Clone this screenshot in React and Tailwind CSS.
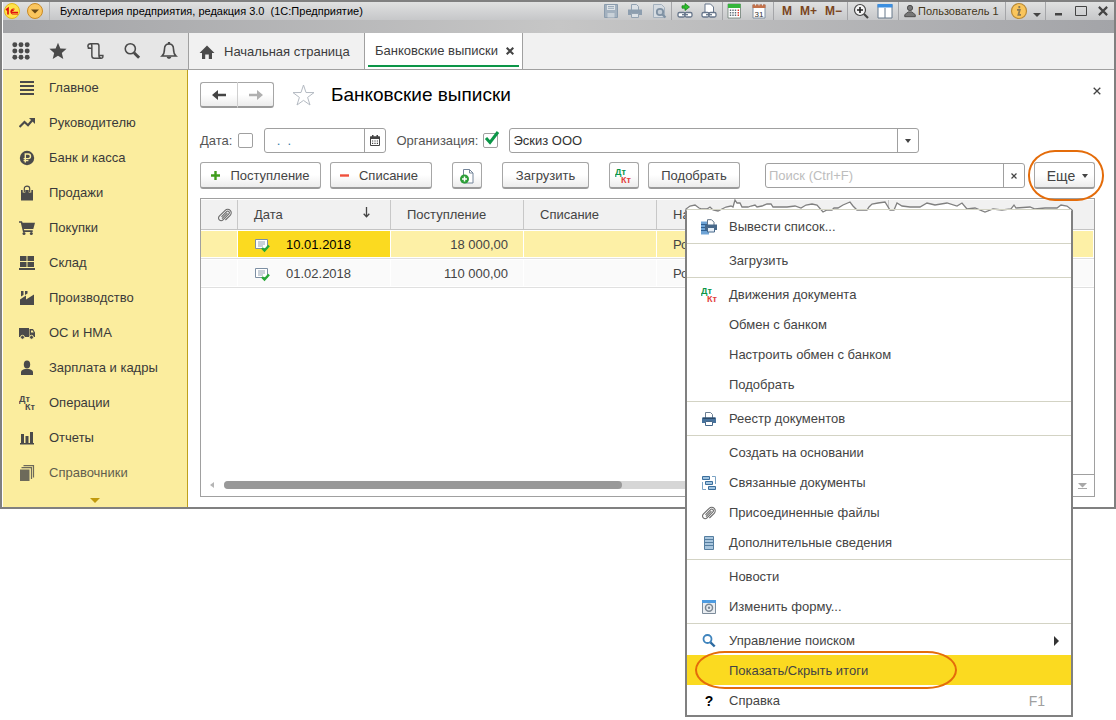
import React, { useState } from "react";
import clsx from "clsx";

/* ---------- ICON HELPERS ---------- */
const Icon = ({ size = 16, children, className }) => (
  <svg
    width={size}
    height={size}
    viewBox="0 0 16 16"
    fill="none"
    className={clsx("shrink-0", className)}
    aria-hidden="true"
  >
    {children}
  </svg>
);

const DtKt = ({ top = "#0a9648", bottom = "#e2403c" }) => (
  <svg width="18" height="16" viewBox="0 0 18 16" className="shrink-0" aria-hidden="true">
    <text x="0" y="7" fontSize="9" fontWeight="bold" fontFamily="Liberation Sans, sans-serif" fill={top}>
      Дт
    </text>
    <text x="6" y="15" fontSize="9" fontWeight="bold" fontFamily="Liberation Sans, sans-serif" fill={bottom}>
      Кт
    </text>
  </svg>
);

const CaretDown = () => (
  <svg width="6" height="4" viewBox="0 0 6 4" className="shrink-0" aria-hidden="true">
    <path d="M0 0h6L3 4z" fill="#444" />
  </svg>
);

const Clip = () => (
  <Icon>
    <path
      d="M4.5 8.8 9.6 3.6a1.6 1.6 0 0 1 2.3 2.3L6 11.8a2.6 2.6 0 0 1-3.7-3.7L8.2 2.3a3.5 3.5 0 0 1 5 5L8.4 12M10.4 5.2 5 10.6"
      stroke="#6a6a6a"
      strokeWidth="1.1"
      transform="translate(0 1)"
    />
  </Icon>
);

const Cross = ({ size = 8, width = 2 }) => (
  <svg width={size} height={size} viewBox="0 0 8 8" aria-hidden="true">
    <path d="M.7.7l6.6 6.6M7.3.7L.7 7.3" stroke="#444" strokeWidth={width} />
  </svg>
);

/* ---------- SIDEBAR ---------- */
const DARK = "#4a4a4a";

const sections = [
  {
    label: "Главное",
    icon: <path d="M1 1h14v2H1zM1 5h14v2H1zM1 9h14v2H1zM1 13h14v2H1z" fill={DARK} />,
  },
  {
    label: "Руководителю",
    icon: (
      <>
        <path d="M.5 12 5.5 7l3.5 3.2L13.5 5" stroke={DARK} strokeWidth="2.2" />
        <path d="M10 3h6v6z" fill={DARK} />
      </>
    ),
  },
  {
    label: "Банк и касса",
    icon: (
      <>
        <circle cx="8" cy="8" r="7.2" fill={DARK} />
        <path d="M6.3 12.5V4h2.9a2.3 2.3 0 0 1 0 4.6H4.6M4.6 10.6h4.8" stroke="#fbed9e" strokeWidth="1.4" />
      </>
    ),
  },
  {
    label: "Продажи",
    icon: (
      <>
        <path d="M2 5h12v10.5H2z" fill={DARK} />
        <path d="M5 7.5V3.4C5 0 11 0 11 3.4v4.1" stroke="#fbed9e" strokeWidth="2.6" />
        <path d="M5.3 7V3.4C5.3.3 10.7.3 10.7 3.4V7" stroke={DARK} strokeWidth="1.2" />
      </>
    ),
  },
  {
    label: "Покупки",
    icon: (
      <>
        <path d="M0 1.3h3l.6 1.5H16L14.3 9H4.8l.5 1.3h8.4v1.6H4L1.8 2.8H0z" fill={DARK} />
        <circle cx="5" cy="13.6" r="1.5" fill={DARK} />
        <circle cx="12.3" cy="13.6" r="1.5" fill={DARK} />
      </>
    ),
  },
  {
    label: "Склад",
    icon: <path d="M1 1h6.5v5H1zM8.5 1H15v5H8.5zM1 7h6.5v5H1zM8.5 7H15v5H8.5zM0 13h16v2H0z" fill={DARK} />,
  },
  {
    label: "Производство",
    icon: (
      <>
        <path d="M1 15V9.500l6-4v4l8-5V15z" fill={DARK} />
        <path d="M2 1h2.500v4L2 6.600zM6 1h2.500v2.500L6 5z" fill={DARK} />
      </>
    ),
  },
  {
    label: "ОС и НМА",
    icon: (
      <>
        <path d="M0 3h10v9H0zM10.500 4h3.500L16 7.500V12h-5.500z" fill={DARK} />
        <path d="M12 5.500h1.700l1 2H12z" fill="#fbed9e" />
        <circle cx="3.500" cy="12.300" r="2" fill={DARK} stroke="#fbed9e" strokeWidth=".9" />
        <circle cx="12.500" cy="12.300" r="2" fill={DARK} stroke="#fbed9e" strokeWidth=".9" />
      </>
    ),
  },
  {
    label: "Зарплата и кадры",
    icon: (
      <>
        <ellipse cx="8" cy="4.500" rx="3.200" ry="3.900" fill={DARK} />
        <path d="M2 15v-3c0-1.600 2.600-2.600 4.300-2.900h3.400c1.700.300 4.300 1.300 4.300 2.900v3z" fill={DARK} />
      </>
    ),
  },
  { label: "Операции", dtkt: true },
  {
    label: "Отчеты",
    icon: <path d="M2 4h3v9H2zM6.500 6h3v7h-3zM11 2h3v11h-3zM1 13h14v1.500H1z" fill={DARK} />,
  },
  {
    label: "Справочники",
    faded: true,
    icon: (
      <>
        <path d="M1 4.500h9.500V16H1z" fill={DARK} />
        <path d="M2.500 2.700h10V14M4.500.700h10v11.800" stroke={DARK} strokeWidth="1.200" />
      </>
    ),
  },
];

const Sidebar = () => (
  <nav className="flex w-[185px] shrink-0 flex-col border-r border-[#bfa01c] bg-[#fbed9e]">
    {sections.map((item) => (
      <a
        key={item.label}
        href="#"
        className={clsx(
          "flex h-[35px] items-center pt-px pl-4 text-[#3a3a3a]",
          item.faded && "opacity-80"
        )}
      >
        <span className="w-[30px] shrink-0">
          {item.dtkt ? <DtKt top={DARK} bottom={DARK} /> : <Icon>{item.icon}</Icon>}
        </span>
        {item.label}
      </a>
    ))}
    <button aria-label="Прокрутить вниз" className="flex flex-1 items-center justify-center pt-1">
      <svg width="10" height="5" viewBox="0 0 10 5">
        <path d="M0 0h10L5 5z" fill="#c19a0c" />
      </svg>
    </button>
  </nav>
);

/* ---------- TITLE BAR ---------- */
const Divider = () => <span className="h-[18px] w-px shrink-0 bg-[#a4a5a8]" />;

const TitleBar = () => (
  <header className="bg-linear-to-r from-[#a3a4a7] via-[#c6c6c6] to-[#a3a4a8] pb-[13px]">
    <div className="flex h-[18px] items-center bg-linear-to-b from-[#e0e1e1] to-[#c6c7c9] text-[11px] whitespace-nowrap text-black">
      <svg width="16" height="16" viewBox="0 0 16 16" className="ml-px shrink-0" aria-hidden="true">
        <circle cx="8" cy="8" r="7.500" fill="#ffe34a" stroke="#e0b000" strokeWidth=".8" />
        <path d="M2 7 4 5.500v6" stroke="#e01010" strokeWidth="1.700" fill="none" />
        <path d="M10.500 6.200A2.600 2.600 0 1 0 8.500 11H14M9.500 8a1 1 0 1 0-1 1.400H14" stroke="#e01010" strokeWidth="1.100" fill="none" />
      </svg>
      <button aria-label="Главное меню" className="ml-[7px] shrink-0">
        <svg width="16" height="16" viewBox="0 0 16 16">
          <circle cx="8" cy="8" r="7.500" fill="#fbc65e" stroke="#c98a25" />
          <path d="M4 6.500h8L8 10.500z" fill="#6b4a16" />
        </svg>
      </button>
      <span className="mr-[10px] ml-[6px] h-[18px] w-px bg-[#b4b5b6]" />
      <span className="whitespace-pre">Бухгалтерия предприятия, редакция 3.0  (1С:Предприятие)</span>

      <div className="ml-auto flex items-center">
        <div className="flex items-center gap-2 px-1">
          <button aria-label="Сохранить">
            <Icon>
              <path d="M1.500 1.500h13v13h-13z" fill="#a3b1bf" stroke="#8b9cad" />
              <path d="M4 2h8v5H4z" fill="#dfe4e8" />
              <path d="M5 3.500h6M5 5.300h6" stroke="#9aaaba" />
              <path d="M4.500 10h7v4.500h-7z" fill="#c9d1d8" />
            </Icon>
          </button>
          <button aria-label="Печать">
            <Icon>
              <path d="M4.500 7V1.500h5l2 2V7" fill="#dce1e6" stroke="#94a3b2" />
              <path d="M1 6.500h14V12H1z" fill="#8d9eaf" />
              <path d="M4.500 10.500h7v4h-7z" fill="#dce1e6" stroke="#94a3b2" />
            </Icon>
          </button>
          <button aria-label="Предварительный просмотр">
            <Icon>
              <path d="M2.500 1.500h8l3 3v10h-11z" fill="#d5dbe1" stroke="#a3b0bd" />
              <circle cx="9" cy="9" r="3.200" fill="#c3ccd5" stroke="#7f91a3" strokeWidth="1.800" />
              <path d="m11.500 11.500 3 3" stroke="#7f91a3" strokeWidth="2.200" />
            </Icon>
          </button>
        </div>
        <Divider />
        <div className="flex items-center gap-2 px-[5px]">
          <button aria-label="Получить ссылку">
            <Icon>
              <path d="M5 2.800h3V.500L12.500 4 8 7.500V5.200H5z" fill="#2cc02c" stroke="#147a14" strokeWidth=".7" />
              <rect x="1" y="9.500" width="7" height="4.500" rx="1.500" fill="#fff" stroke="#66758a" strokeWidth="1.300" />
              <rect x="8" y="9.500" width="7" height="4.500" rx="1.500" fill="#fff" stroke="#66758a" strokeWidth="1.300" />
              <path d="M5 11.700h6" stroke="#66758a" strokeWidth="1.300" />
            </Icon>
          </button>
          <button aria-label="Перейти по ссылке">
            <Icon>
              <path d="M4 9V1h5.500l3 3v5" fill="#fff" stroke="#66758a" />
              <rect x="1" y="9.500" width="7" height="4.500" rx="1.500" fill="#fff" stroke="#66758a" strokeWidth="1.300" />
              <rect x="8" y="9.500" width="7" height="4.500" rx="1.500" fill="#fff" stroke="#66758a" strokeWidth="1.300" />
              <path d="M5 11.700h6" stroke="#66758a" strokeWidth="1.300" />
            </Icon>
          </button>
        </div>
        <Divider />
        <div className="flex w-[50px] items-center justify-between pr-[6px] pl-[3px]">
          <button aria-label="Калькулятор">
            <Icon>
              <path d="M2 1h12.500v14H2z" fill="#fff" stroke="#6b7c72" strokeWidth=".8" />
              <path d="M2 1h12.500v4H2z" fill="#35b53b" />
              <path d="M4.500 6.500V14M7 6.500V14M9.500 6.500V14" stroke="#5f6d78" strokeWidth="1.400" strokeDasharray="1.500 1" />
              <path d="M12.300 6.500V14" stroke="#d8392b" strokeWidth="1.400" strokeDasharray="1.500 1" />
            </Icon>
          </button>
          <button aria-label="Календарь">
            <Icon>
              <path d="M2 2h12v13H2z" fill="#fff" stroke="#8292a3" />
              <path d="M1.500 1.500h13v3.500h-13z" fill="#c3714a" />
              <path d="M4.500.500v2M8 .500v2M11.500.500v2" stroke="#e8e8e8" />
              <text x="3.500" y="13.500" fontSize="8" fontFamily="Liberation Sans, sans-serif" fill="#333">
                31
              </text>
            </Icon>
          </button>
        </div>
        <Divider />
        <div className="flex w-[73px] items-center justify-between pr-[5px] pl-2 text-[12px] font-bold text-[#7a4520]">
          <button>M</button>
          <button>M+</button>
          <button>M−</button>
        </div>
        <Divider />
        <div className="flex w-[50px] items-center justify-between px-[5px]">
          <button aria-label="Масштаб">
            <Icon>
              <circle cx="7" cy="7" r="5.500" fill="#f4f4f4" stroke="#444" strokeWidth="1.200" />
              <path d="M7 4v6M4 7h6" stroke="#222" strokeWidth="1.600" />
              <path d="m11 11 4 4" stroke="#444" strokeWidth="2.200" />
            </Icon>
          </button>
          <button aria-label="Панели">
            <Icon>
              <path d="M1 1.500h14v13.500H1z" fill="#fff" stroke="#66788a" />
              <path d="M.500 1h15v3.500H.500z" fill="#3c8fe0" />
              <path d="M8 5v10" stroke="#66788a" />
            </Icon>
          </button>
        </div>
        <Divider />
        <button className="flex w-[106px] items-center gap-px pl-1 text-[#44371a]">
          <Icon size={14}>
            <circle cx="8" cy="4.500" r="3" fill="#777" stroke="#444" />
            <path d="M2 14.500v-2.300L6 9h4l4 3.200v2.300z" fill="#777" stroke="#444" />
          </Icon>
          Пользователь 1
        </button>
        <Divider />
        <div className="flex w-[39px] items-center justify-between px-1">
          <button aria-label="Информация">
            <svg width="18" height="18" viewBox="0 0 18 18">
              <circle cx="9" cy="9" r="7.500" fill="#f9c55c" stroke="#b98a35" strokeWidth="1.200" />
              <path d="M7 7.800h2.800l-1.400 5H11M9.300 4v2.200" stroke="#8b7a55" strokeWidth="1.800" fill="none" />
            </svg>
          </button>
          <svg width="8" height="4" viewBox="0 0 8 4" className="mt-2">
            <path d="M0 0h8L4 4z" fill="#444" />
          </svg>
        </div>
        <Divider />
        <div className="flex w-[68px] items-center justify-between pr-[6px] pl-2">
          <button aria-label="Свернуть">
            <svg width="9" height="12" viewBox="0 0 9 12">
              <path d="M1 8h7v2.500H1z" fill="#444" />
            </svg>
          </button>
          <button aria-label="Развернуть">
            <svg width="12" height="10" viewBox="0 0 12 10">
              <path d="M.500 .500h11v9H.500z" stroke="#444" fill="none" />
            </svg>
          </button>
          <button aria-label="Закрыть">
            <Cross size={10} width={1.700} />
          </button>
        </div>
      </div>
    </div>
  </header>
);

/* ---------- TABS ---------- */
const TabBar = () => (
  <div className="flex h-[37px] border-b border-[#a0a0a0] bg-[#f1f1f1]">
    <div className="flex w-[186px] shrink-0 items-center gap-[19px] border-r border-[#a0a0a0] bg-[#e6e6e6] pl-[9px]">
      <button aria-label="Разделы">
        <Icon size={18}>
          {[2.5, 8, 13.5].map((y) =>
            [2.5, 8, 13.5].map((x) => <circle key={`${x}-${y}`} cx={x} cy={y} r="2.200" fill={DARK} />)
          )}
        </Icon>
      </button>
      <button aria-label="Избранное">
        <Icon size={18}>
          <path d="m8 .600 2.100 5.100 5.500.400-4.200 3.600 1.300 5.400L8 12.200l-4.700 2.900 1.300-5.400L.400 6.100l5.500-.400z" fill={DARK} />
        </Icon>
      </button>
      <button aria-label="История">
        <Icon size={18}>
          <path
            d="M4 1.500h6c1.500 0 1.500 1 1.500 2V12c0 3 3.500 3 3.500 1v-1h-3.500M4 1.500c-3 0-3 4-.500 4h.500M4 1.500c1 0 1.200 1 1.200 2V12c0 1.500.500 2.500 2 2.500H13M1.500 5.500H5"
            stroke={DARK}
            strokeWidth="1.300"
          />
        </Icon>
      </button>
      <button aria-label="Поиск">
        <Icon size={18}>
          <circle cx="6.500" cy="6" r="4.500" stroke={DARK} strokeWidth="1.400" />
          <path d="m9.800 9.500 4.500 4.500" stroke={DARK} strokeWidth="2.600" />
        </Icon>
      </button>
      <button aria-label="Уведомления">
        <Icon size={18}>
          <path
            d="M8 1.700c3 0 4 2.300 4 4.500 0 3.500.800 5 2.300 6.300H1.700C3.200 11.200 4 9.700 4 6.200c0-2.200 1-4.500 4-4.500z"
            stroke={DARK}
            strokeWidth="1.400"
          />
          <path d="M7 0h2v2H7zM6 13h4c0 2.500-4 2.500-4 0z" fill={DARK} />
        </Icon>
      </button>
    </div>
    <a href="#" className="flex w-[176px] items-center gap-[9px] border-r border-[#a0a0a0] pt-px pl-[10px] text-[#3c3c3c]">
      <Icon>
        <path d="M8 1.500 15.500 9H13v6H9.800v-4.500H6.200V15H3V9H.500z" fill={DARK} />
      </Icon>
      Начальная страница
    </a>
    <div className="flex w-[158px] border-r border-[#a0a0a0] bg-white px-[3px] pb-[2px]">
      <div className="flex flex-1 items-center justify-between border-b-2 border-[#0c9648] pt-1 pr-[5px] pl-[7px] text-[#3c3c3c]">
        <a href="#">Банковские выписки</a>
        <button aria-label="Закрыть вкладку">
          <Cross />
        </button>
      </div>
    </div>
  </div>
);

/* ---------- TOOLBAR ---------- */
const ToolButton = ({ className, children, ...props }) => (
  <button
    className={clsx(
      "flex shrink-0 items-center justify-center rounded-[3px] border border-b-2 border-[#a6a6a6] border-b-[#9a9a9a] bg-linear-to-b from-white from-50% to-[#ececec] pt-px text-[#444]",
      className
    )}
    {...props}
  >
    {children}
  </button>
);

/* ---------- MENU "ЕЩЕ" ---------- */
const menuGroups = [
  [
    {
      label: "Вывести список...",
      icon: (
        <>
          <path d="M0 2.500h8V15.500H0z" fill="#6fa4d6" />
          <path d="M0 5.500h6M0 8.500h6M0 11.500h6" stroke="#2f6193" />
          <path d="M6.500 6V.700h4l2.500 2.500V6" fill="#fff" stroke="#5f7286" />
          <path d="M4 5.500h12V11H4z" fill="#47688a" />
          <path d="M6.500 8.500h7v4.500h-7z" fill="#e5eef7" stroke="#47688a" />
        </>
      ),
    },
  ],
  [{ label: "Загрузить" }],
  [
    { label: "Движения документа", dtkt: true },
    { label: "Обмен с банком" },
    { label: "Настроить обмен с банком" },
    { label: "Подобрать" },
  ],
  [
    {
      label: "Реестр документов",
      icon: (
        <>
          <path d="M4.500 7V1.500h5l2 2V7" fill="#fff" stroke="#6c7f93" />
          <path d="M1 6.500h14V12H1z" fill="#47729c" />
          <path d="M2 6.500h12v1.500H2z" fill="#2b4a6a" />
          <path d="M4.500 10.500h7v4h-7z" fill="#fff" stroke="#47688a" />
        </>
      ),
    },
  ],
  [
    { label: "Создать на основании" },
    {
      label: "Связанные документы",
      icon: (
        <>
          <path d="M1.500 1.500h7v3h-7zM4.500 6.500h7v3h-7zM7.500 11.500h7v3h-7z" fill="#9fc3e0" stroke="#3c6f9c" />
          <path d="M11 1.500h3.500V9M1.500 7v7.500H5" stroke="#7ba3c4" />
        </>
      ),
    },
    { label: "Присоединенные файлы", clip: true },
    {
      label: "Дополнительные сведения",
      icon: (
        <>
          <path d="M3.500 1.500h9v13h-9z" fill="#a9c6de" stroke="#557ea0" />
          <path d="M4 4.500h8M4 7.500h8M4 10.500h8" stroke="#557ea0" strokeWidth="1.200" />
        </>
      ),
    },
  ],
  [
    { label: "Новости" },
    {
      label: "Изменить форму...",
      icon: (
        <>
          <path d="M1.500 2h13v12.500h-13z" fill="#e9edf1" stroke="#7d8c9b" />
          <path d="M1 1h14v3H1z" fill="#4e9be0" />
          <circle cx="8" cy="8.800" r="3.500" stroke="#7b8792" strokeWidth="1.500" />
          <circle cx="8" cy="8.800" r="1.200" fill="#7b8792" />
        </>
      ),
    },
  ],
  [
    {
      label: "Управление поиском",
      submenu: true,
      icon: (
        <>
          <circle cx="6.500" cy="6" r="4" stroke="#3f84bd" strokeWidth="1.800" />
          <path d="m9.500 9.300 4.200 4.200" stroke="#2c6aa0" strokeWidth="2.400" />
        </>
      ),
    },
    { label: "Показать/Скрыть итоги", highlighted: true },
    { label: "Справка", help: true, hotkey: "F1" },
  ],
];

// Torn upper edge: the part of the menu above it is cut away
const TORN_EDGE =
  "M1 18V11L5 8 10 7 14 10 17 11 22 11 25 9 28 12 33 13 37 11 41 9 46 8 48 9 50 2 52 5 55 5 57 9 63 9 66 8 70 7 72 9 77 8 82 6 86 6 88 9 95 9 102 9 110 8 116 10 121 7 127 6 132 7 138 14 142 12 147 12 149 10 153 10 158 7 165 4 168 8 172 12 182 12 184 9 187 6 193 5 200 4 205 12 209 12 212 5 217 8 225 9 235 9 242 5 250 7 262 5 272 8 277 5 282 11 290 10 300 14 308 11 317 12 326 11 329 7 331 10 345 9 350 11 360 10 372 10 376 7 382 8 387 12V18";

const MoreMenu = () => (
  <div className="absolute top-full right-[22px] z-10 mt-[9px] w-[388px]">
    <svg viewBox="0 0 388 18" width="388" height="18" className="block" aria-hidden="true">
      <path d={TORN_EDGE} fill="#fff" stroke="#808080" strokeWidth="1.300" />
      <path d="M2 11.500h384" stroke="#d3d3c4" />
      <path d="M1 13v5M387 13v5" stroke="#808080" strokeWidth="2" />
    </svg>
    <div role="menu" className="-mt-[6px] border-x-2 border-b-2 border-[#808080] bg-white">
      {menuGroups.map((group, index) => (
        <div key={index} className={clsx("pt-px", index > 0 && "border-t border-[#d3d3c4]", index < 6 && "pb-[2px]")}>
          {group.map((item) => (
            <button
              key={item.label}
              role="menuitem"
              className={clsx(
                "relative flex h-[30px] w-full items-center pt-[2px] pl-[14px] text-left text-[#444]",
                item.highlighted && "bg-[#fbda20]"
              )}
            >
              <span className="flex w-[28px] shrink-0 items-center">
                {item.icon && <Icon>{item.icon}</Icon>}
                {item.dtkt && <DtKt />}
                {item.clip && <Clip />}
                {item.help && <span className="w-4 text-center text-[14px] font-bold text-black">?</span>}
              </span>
              {item.label}
              {item.hotkey && <span className="ml-auto pr-[26px] text-[14px] text-[#a0a0a0]">{item.hotkey}</span>}
              {item.submenu && (
                <svg width="5" height="10" viewBox="0 0 5 10" className="mr-3 ml-auto">
                  <path d="M0 0l5 5-5 5z" fill="#333" />
                </svg>
              )}
              {item.highlighted && (
                <span className="pointer-events-none absolute -top-1 left-2 h-[38px] w-[262px] rounded-[30px/19px] border-2 border-[#e46c0a]" />
              )}
            </button>
          ))}
        </div>
      ))}
    </div>
  </div>
);

/* ---------- TABLE ---------- */
const rows = [
  { date: "10.01.2018", income: "18 000,00", outcome: "", purpose: "Розничный", selected: true },
  { date: "01.02.2018", income: "110 000,00", outcome: "", purpose: "Розничный" },
];

const DocumentIcon = () => (
  <Icon>
    <path d="M1.500 2.500h12v9h-12z" fill="#fff" stroke="#7d8fa3" />
    <path d="M4 5h7M4 7h7M4 9h5" stroke="#94a3b3" />
    <path d="m8 11 2.500 2.500L15 8.500" stroke="#27a836" strokeWidth="2.400" />
  </Icon>
);

const HeadCell = ({ children, className }) => (
  <th className="border-b border-[#c4c4c4] p-0 font-normal">
    <div className={clsx("mt-px flex h-[29px] items-center border-r border-[#c8c8c8] bg-[#f1f1f1]", className)}>
      {children}
    </div>
  </th>
);

const Cell = ({ children, className, active, selected }) => (
  <td className="border-b border-[#e0e0e0] p-0">
    <div
      className={clsx(
        "my-px mr-px flex h-[26px] items-center pt-[2px]",
        active ? "bg-[#fbda20] text-black" : selected ? "bg-[#fdf0a6]" : "bg-[#fafafa]",
        className
      )}
    >
      {children}
    </div>
  </td>
);

const StatementsTable = () => (
  <div className="mt-[9px] flex flex-col border border-[#a0a0a0] bg-white">
    <table className="w-full table-fixed border-separate border-spacing-0 text-left text-[#444]">
      <colgroup>
        <col className="w-[37px]" />
        <col className="w-[153px]" />
        <col className="w-[133px]" />
        <col className="w-[133px]" />
        <col className="w-[232px]" />
        <col />
      </colgroup>
      <thead>
        <tr>
          <HeadCell className="justify-end pr-1">
            <Clip />
          </HeadCell>
          <HeadCell className="justify-between pr-5 pl-4">
            Дата
            <svg width="7" height="11" viewBox="0 0 7 11" className="mb-1" aria-hidden="true">
              <path d="M3.500 0v9.500M.700 6.800l2.800 3 2.800-3" stroke="#444" strokeWidth="1.300" fill="none" />
            </svg>
          </HeadCell>
          <HeadCell className="pl-4">Поступление</HeadCell>
          <HeadCell className="pl-4">Списание</HeadCell>
          <HeadCell className="pl-4">Назначение</HeadCell>
          <HeadCell className="border-r-0" />
        </tr>
      </thead>
      <tbody>
        {rows.map((row) => (
          <tr key={row.date}>
            <Cell selected={row.selected} />
            <Cell active={row.selected} className="gap-4 pl-4">
              <DocumentIcon />
              {row.date}
            </Cell>
            <Cell selected={row.selected} className="justify-end pr-[15px]">
              {row.income}
            </Cell>
            <Cell selected={row.selected}>{row.outcome}</Cell>
            <Cell selected={row.selected} className="pl-4">
              {row.purpose}
            </Cell>
            <Cell selected={row.selected} />
          </tr>
        ))}
      </tbody>
    </table>
    <div className="mt-[186px] flex h-[22px] items-center">
      <svg width="4" height="6" viewBox="0 0 4 6" className="mr-[10px] ml-[9px] shrink-0" aria-hidden="true">
        <path d="M4 0v6L0 3z" fill="#b5b5b5" />
      </svg>
      <div className="h-2 flex-1 rounded-full bg-[#d6d6d6]">
        <div className="h-2 w-[48%] rounded-full bg-[#999]" />
      </div>
      <button aria-label="В конец списка" className="ml-4 flex h-full w-6 items-center justify-center border-t border-l border-[#a0a0a0]">
        <svg width="9" height="6" viewBox="0 0 9 6">
          <path d="M0 0h9L4.500 4.500zM0 5h9v1H0z" fill="#a8a8a8" />
        </svg>
      </button>
    </div>
  </div>
);

/* ---------- PAGE ---------- */
const BankStatements = () => {
  const [useDate, setUseDate] = useState(false);
  const [useOrg, setUseOrg] = useState(true);
  const [date, setDate] = useState("  .  .");
  const [search, setSearch] = useState("");

  return (
    <main className="min-w-0 flex-1 bg-white pt-3 pr-[19px] pb-[10px] pl-3">
      <div className="flex h-[26px] items-center">
        <div className="flex">
          <ToolButton className="h-[26px] w-[38px] rounded-r-none border-r-[#cfcfcf]" aria-label="Назад">
            <svg width="14" height="10" viewBox="0 0 14 10">
              <path d="M14 3.800v2.400H6V10L0 5l6-5v3.800z" fill="#444" />
            </svg>
          </ToolButton>
          <ToolButton className="h-[26px] w-[36px] rounded-l-none border-l-0" aria-label="Вперед">
            <svg width="14" height="10" viewBox="0 0 14 10">
              <path d="M0 3.800v2.400h8V10l6-5-6-5v3.800z" fill="#b0b0b0" />
            </svg>
          </ToolButton>
        </div>
        <button aria-label="В избранное" className="ml-[17px]">
          <svg width="25" height="24" viewBox="0 0 25 24">
            <path
              d="M12.500 2l2.500 7.500 8 .100-6.400 4.800L19 22l-6.500-4.600L6 22l2.400-7.600L2 9.600l8-.100z"
              fill="#fff"
              stroke="#b4bac2"
            />
          </svg>
        </button>
        <h1 className="ml-[15px] text-[19px] text-black">Банковские выписки</h1>
        <button aria-label="Закрыть" className="mr-[-6px] ml-auto self-start pt-[5px]">
          <Cross size={8} width={1.300} />
        </button>
      </div>

      {/* ---------- FILTERS ---------- */}
      <div className="mt-5 flex h-[25px] items-center text-[#555]">
        <label htmlFor="use-date">Дата:</label>
        <input
          id="use-date"
          type="checkbox"
          checked={useDate}
          onChange={(e) => setUseDate(e.target.checked)}
          className="ml-[6px] size-[15px] shrink-0 appearance-none rounded-[2px] border border-[#a0a0a0] bg-white"
        />
        <div className="ml-[11px] flex h-[25px] w-[122px] shrink-0 rounded-[3px] border border-[#a0a0a0]">
          <input
            aria-label="Дата"
            value={date}
            onChange={(e) => setDate(e.target.value)}
            className="min-w-0 flex-1 pl-1 text-[#357ba8] outline-none"
          />
          <button aria-label="Выбрать дату" className="flex w-[21px] items-center justify-center border-l border-[#a0a0a0]">
            <svg width="10" height="11" viewBox="0 0 10 11">
              <path d="M.500 2h9v8.500h-9z" fill="#fff" stroke="#444" />
              <path d="M0 1.500h10v2.500H0zM2 0h1.500v2H2zM6.500 0H8v2H6.500z" fill="#444" />
              <path d="M2 6h6.500M2 8.300h6.500" stroke="#444" strokeWidth="1.200" strokeDasharray="1.200 1.200" />
            </svg>
          </button>
        </div>
        <label htmlFor="use-org" className="ml-[10px]">
          Организация:
        </label>
        <div className="ml-[5px] grid">
          <input
            id="use-org"
            type="checkbox"
            checked={useOrg}
            onChange={(e) => setUseOrg(e.target.checked)}
            className="col-start-1 row-start-1 size-[15px] appearance-none rounded-[2px] border border-[#a0a0a0] bg-white"
          />
          {useOrg && (
            <svg
              width="15"
              height="15"
              viewBox="0 0 15 15"
              className="pointer-events-none col-start-1 row-start-1 overflow-visible"
            >
              <path d="M3 5 7 9.500 15 -1" stroke="#0c9648" strokeWidth="3" fill="none" />
            </svg>
          )}
        </div>
        <div className="ml-[11px] grid h-[25px] w-[410px] rounded-[3px] border border-[#a0a0a0]">
          <select
            aria-label="Организация"
            className="col-start-1 row-start-1 w-full appearance-none bg-transparent pl-[3px] text-[#333] outline-none"
          >
            <option>Эскиз ООО</option>
          </select>
          <span className="pointer-events-none col-start-1 row-start-1 flex w-[21px] items-center justify-center justify-self-end border-l border-[#a0a0a0]">
            <CaretDown />
          </span>
        </div>
      </div>

      {/* ---------- COMMANDS ---------- */}
      <div className="mt-[9px] flex h-[27px] items-center">
        <ToolButton className="h-[27px] w-[121px] gap-[10px]">
          <svg width="9" height="9" viewBox="0 0 9 9">
            <path d="M4.500 0v9M0 4.500h9" stroke="#3f9c1c" strokeWidth="2.400" />
          </svg>
          Поступление
        </ToolButton>
        <ToolButton className="ml-[9px] h-[27px] w-[102px] gap-[10px] pr-1">
          <svg width="9" height="9" viewBox="0 0 9 9">
            <path d="M0 4.500h9" stroke="#f0503c" strokeWidth="2.400" />
          </svg>
          Списание
        </ToolButton>
        <ToolButton className="ml-5 h-[27px] w-[30px]" aria-label="Скопировать">
          <Icon>
            <path d="M4.500 1.500h6l3.500 3.500v10H4.500z" fill="#fff" stroke="#74859a" />
            <path d="M10.500 1.500V5H14" stroke="#74859a" />
            <circle cx="5.500" cy="11" r="4.500" fill="#2c9e37" />
            <path d="M5.500 8.500v5M3 11h5" stroke="#fff" strokeWidth="1.500" />
          </Icon>
        </ToolButton>
        <ToolButton className="ml-5 h-[27px] w-[87px]">Загрузить</ToolButton>
        <ToolButton className="ml-5 h-[27px] w-[30px]" aria-label="Движения документа">
          <DtKt />
        </ToolButton>
        <ToolButton className="ml-[9px] h-[27px] w-[92px]">Подобрать</ToolButton>
        <div className="ml-auto flex h-[25px] w-[260px] rounded-[3px] border border-[#a0a0a0]">
          <input
            aria-label="Поиск"
            placeholder="Поиск (Ctrl+F)"
            value={search}
            onChange={(e) => setSearch(e.target.value)}
            className="min-w-0 flex-1 pl-[3px] outline-none placeholder:text-[#bdbdbd]"
          />
          <button
            aria-label="Очистить"
            onClick={() => setSearch("")}
            className="flex w-[21px] items-center justify-center border-l border-[#a0a0a0]"
          >
            <Cross size={6} width={1.600} />
          </button>
        </div>
        <div className="relative ml-[9px]">
          <ToolButton className="h-[27px] w-[61px] gap-[7px] pl-[6px] text-[14px]" aria-haspopup="menu" aria-expanded="true">
            Еще
            <CaretDown />
          </ToolButton>
          <span className="pointer-events-none absolute -top-3 -left-[6px] z-20 h-[51px] w-[76px] rounded-[27px/25px] border-2 border-[#e46c0a]" />
          <MoreMenu />
        </div>
      </div>

      <StatementsTable />
    </main>
  );
};

const App = () => (
  <div className="min-h-screen bg-white font-['Liberation_Sans',Arial,sans-serif] text-[13px] leading-[18px]">
    <div className="border-2 border-[#808080] pl-px">
      <TitleBar />
      <TabBar />
      <div className="flex">
        <Sidebar />
        <BankStatements />
      </div>
    </div>
  </div>
);

export default App;
